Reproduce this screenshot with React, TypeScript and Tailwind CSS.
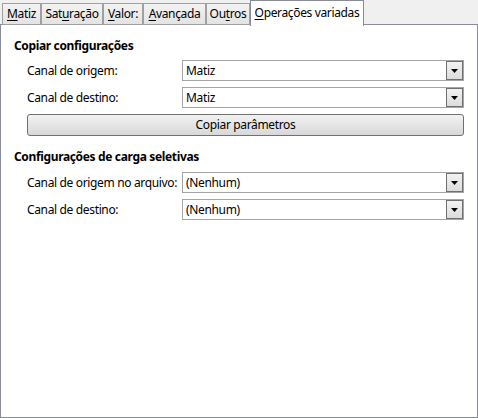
import React from "react";

const Acc = ({ pre = "", k, post = "" }: { pre?: string; k: string; post?: string }) => (
  <span className="whitespace-nowrap">
    {pre}
    <span className="underline underline-offset-2">{k}</span>
    {post}
  </span>
);

const tabs = [
  { w: "w-[39px]", label: <Acc k="M" post="atiz" /> },
  { w: "w-[62px]", label: <Acc pre="Sat" k="u" post="ração" /> },
  { w: "w-[40px]", label: <Acc k="V" post="alor:" /> },
  { w: "w-[63px]", label: <Acc k="A" post="vançada" /> },
  { w: "w-[44px]", label: <Acc pre="Ou" k="t" post="ros" /> },
];

const Combo = ({ value }: { value: string }) => (
  <div className="w-[282px] h-[21px] border border-[#a5a5a5] bg-white flex items-center justify-between">
    <span className="pl-[3px] leading-none">{value}</span>
    <div className="w-[17px] h-[19px] border border-[#707070] bg-gradient-to-b from-[#f2f2f2] to-[#dcdcdc] flex items-center justify-center">
      <svg width="7" height="4" viewBox="0 0 7 4">
        <path d="M0 0h7L3.5 4z" fill="#000" />
      </svg>
    </div>
  </div>
);

const Row = ({ label, value }: { label: string; value: string }) => (
  <div className="flex items-center">
    <div className="w-[155px] whitespace-nowrap">{label}</div>
    <Combo value={value} />
  </div>
);

export default function App() {
  return (
    <div className="w-[478px] h-[418px] bg-[#f0f0f0] flex flex-col text-[12px] tracking-[-0.35px] text-black font-['Segoe_UI','Noto_Sans',sans-serif]">
      <div className="relative z-10 flex items-end h-[25px] pl-[2px]">
        {tabs.map((t, i) => (
          <div
            key={i}
            className={`${t.w} h-[22px] border border-[#a0a0a0] bg-gradient-to-b from-[#f3f3f3] to-[#e3e3e3] flex items-center justify-center`}
          >
            {t.label}
          </div>
        ))}
        <div className="w-[114px] h-[26px] -mb-px border border-b-0 border-[#898c95] bg-white flex items-center justify-center pb-[2px]">
          <Acc k="O" post="perações variadas" />
        </div>
      </div>
      <div className="flex-1 -mt-px bg-white border border-[#898c95] pt-[13px] pl-[13px]">
        <div className="font-bold leading-[16px]">Copiar configurações</div>
        <div className="pl-[13px] pt-[6px] flex flex-col gap-[6px]">
          <Row label="Canal de origem:" value="Matiz" />
          <Row label="Canal de destino:" value="Matiz" />
          <button className="w-[437px] h-[22px] rounded-[3px] border border-[#707070] bg-gradient-to-b from-[#f2f2f2] to-[#d8d8d8] flex items-center justify-center">
            Copiar parâmetros
          </button>
        </div>
        <div className="font-bold leading-[16px] mt-[13px]">Configurações de carga seletivas</div>
        <div className="pl-[13px] pt-[7px] flex flex-col gap-[6px]">
          <Row label="Canal de origem no arquivo:" value="(Nenhum)" />
          <Row label="Canal de destino:" value="(Nenhum)" />
        </div>
      </div>
    </div>
  );
}
